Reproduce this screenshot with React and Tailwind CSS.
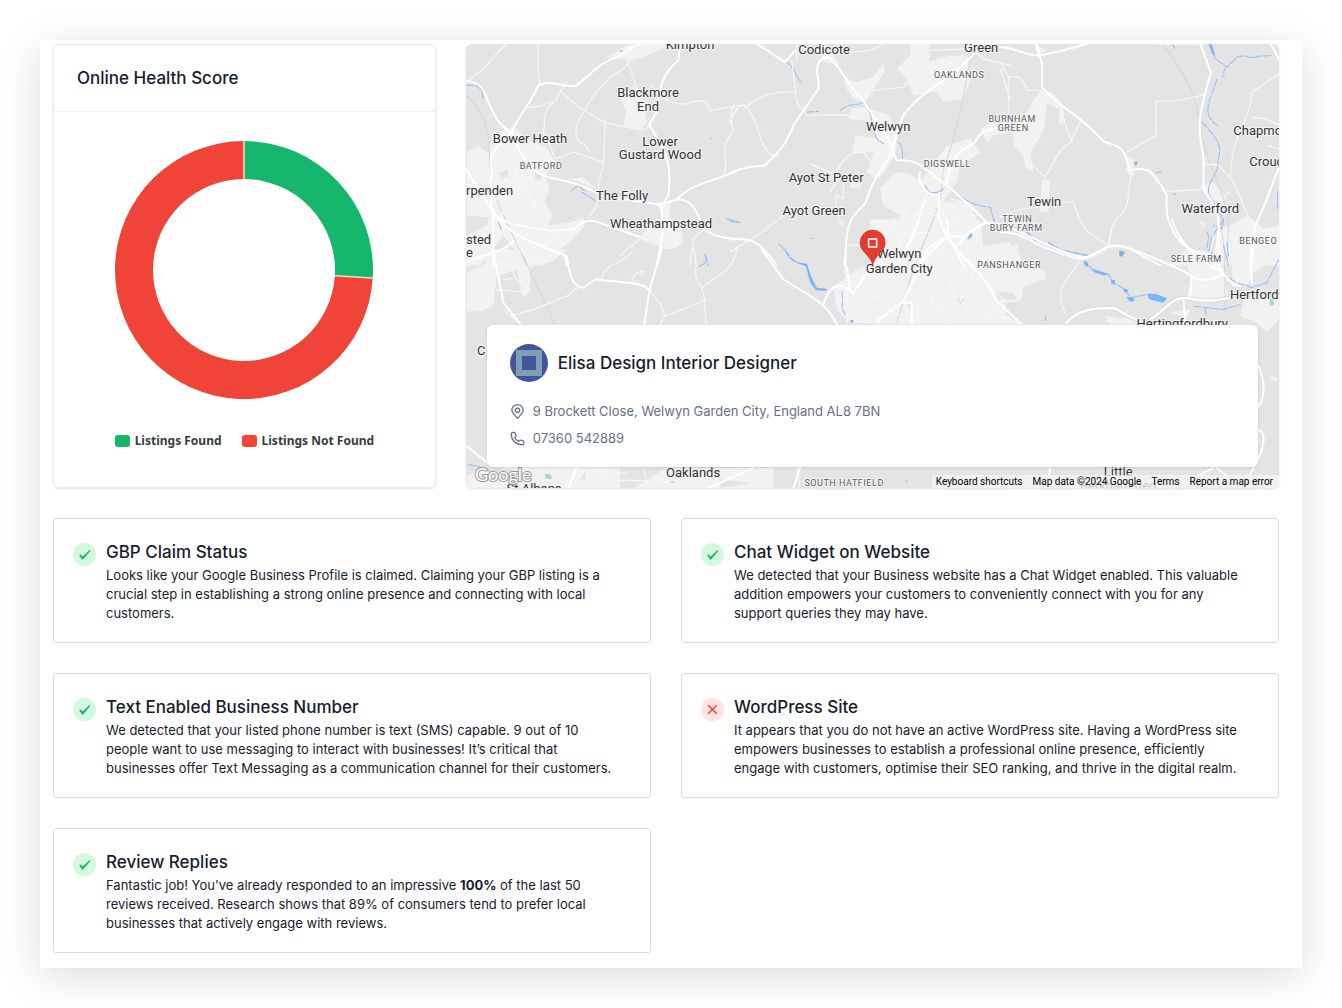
import React from "react";

const TILES = [
  {
    origin: "translate(460 36) scale(0.33333)",
    urban: [
      "M20 350 L55 332 L85 352 L100 300 L160 275 L200 310 L260 335 L285 380 L255 420 L268 460 L255 500 L275 540 L265 570 L330 560 L370 545 L375 570 L330 620 L300 640 L240 690 L150 690 L160 640 L130 600 L60 690 L20 690 L20 600 L80 570 L90 545 L20 540 Z",
      "M482 190 L520 150 L550 190 L560 260 L540 285 L490 270 L498 230 Z",
      "M590 500 L635 495 L625 550 L665 570 L668 625 L640 640 L610 640 L540 610 L570 560 L605 545 Z",
      "M440 65 L500 30 L560 22 L650 24 L520 75 Z",
      "M325 430 L370 425 L410 460 L360 440 Z",
    ],
    shade: ["M115 415 L140 402 L145 415 L125 435 Z", "M225 410 L245 420 L240 435 L225 428 Z"],
    rail: ["M20 180 C70 230 90 290 88 350 C90 460 110 500 135 550 L200 690"],
    minor: [
      "M20 138 L70 100 L120 45 L140 25", "M233 25 C240 60 225 90 240 145", "M205 215 C260 215 260 195 285 200 C300 170 310 150 320 140",
      "M280 200 C240 240 260 260 250 290 L270 330 L285 370 L340 350 L370 360 L430 380", "M300 165 L350 210 L430 260 L495 275 L550 285 L570 270",
      "M500 30 C520 80 510 90 450 125 L400 180 L360 250 C340 280 345 320 370 325 L390 350",
      "M435 255 C430 320 440 380 415 440 C420 500 410 520 385 545", "M575 150 C600 180 620 210 680 205 C740 185 740 200 750 225 L840 210",
      "M820 210 C800 250 830 280 810 300 C770 350 820 390 780 430", "M500 70 L525 140 L540 200", "M205 690 C220 640 270 590 345 590",
      "M25 395 L100 410 L150 440 L220 430", "M50 480 L110 490 L200 450 L260 460", "M120 350 L170 410 L230 520", "M100 400 L60 520", "M155 340 L225 330 L265 380", "M150 450 L120 560", "M180 360 L160 470 L230 500 L200 560", "M200 590 L250 630 L300 600", "M230 600 L250 690", "M560 570 L640 590", "M620 550 L650 630", "M580 600 L665 610", "M690 690 L700 610 L740 570", "M480 660 L540 610",
    ],
    major: [
      "M20 138 C60 135 75 170 85 200 C110 260 130 280 155 290", "M155 290 C170 250 215 200 235 150 C280 130 310 160 350 150 C400 110 420 80 470 65 C510 40 530 25 560 22",
      "M660 22 L655 75 C600 120 600 160 590 230 L568 265 C580 300 630 340 628 430 L625 480 L605 510 L608 590 L590 690",
      "M155 290 C180 360 210 410 265 425 C330 440 380 450 420 480 L600 508 L650 492 C700 440 760 440 840 402",
      "M650 492 C700 490 710 530 730 580 C760 605 800 608 840 612", "M95 400 L92 510 C100 560 160 570 270 585 L340 582 C370 550 400 550 440 570 L540 605",
      "M155 290 C90 350 88 370 95 400", "M100 520 L100 690", "M100 530 C140 600 240 630 315 660 L320 690", "M20 405 L90 515", "M20 680 C80 650 120 660 160 615",
    ],
    water: ["M20 150 C60 145 70 165 68 190", "M115 560 L125 585", "M335 465 L355 450 L375 468", "M365 470 L405 495", "M800 550 L838 560", "M735 660 L745 690", "M480 46 L487 47", "M328 547 L331 548", "M753 309 L756 310"],
  },
  {
    origin: "translate(730 36) scale(0.33333)",
    urban: [
      "M345 130 L380 140 L430 125 L460 80 L465 110 L430 160 L400 200 L370 190 L345 155 Z", "M500 100 L540 60 L540 25 L600 25 L590 80 L660 60 L715 65 L718 140 L700 190 L640 200 L620 170 L550 180 L530 130 Z",
      "M360 220 L400 215 L480 240 L500 330 L480 400 L440 430 L410 410 L430 350 L365 355 L375 300 L440 310 L430 260 L360 250 Z",
      "M450 455 L500 410 L540 415 L570 440 L600 400 L650 330 L720 310 L750 350 L690 390 L680 440 L640 500 L720 500 L740 560 L700 600 L700 690 L435 690 L440 600 L480 600 L510 540 L460 510 Z",
      "M750 280 L780 262 L840 265 L840 290 L790 300 L770 320 Z", "M360 440 L395 440 L390 460 L360 455 Z", "M270 60 L310 60 L330 90 L285 80 Z", "M320 550 L345 560 L335 575 Z", "M700 640 L840 620 L840 690 L700 690 Z",
    ],
    shade: ["M455 425 L500 350 L495 390 Z"],
    rail: ["M718 75 C700 200 670 320 640 400 L630 500 L570 650"],
    minor: [
      "M185 75 L200 200 L230 240 L350 238 L365 250", "M40 220 C90 180 130 165 190 170", "M0 260 C20 210 40 190 60 230 C100 290 70 300 125 360 L150 360", "M200 75 L200 25 ", "M285 60 L420 45 L460 25",
      "M400 200 L430 165 L520 155 L540 130", "M590 90 L600 45 L720 40 L760 70 L840 90", "M600 95 L650 90 L700 60", "M320 410 C340 370 340 360 430 330", "M300 470 L325 430 L310 415 L240 385", "M340 440 L340 490 L315 480 L325 550", "M0 650 L80 600 L160 540", "M350 630 L440 625", "M490 550 L520 690", "M530 500 L500 690", "M470 600 L600 590", "M510 640 L600 650", "M620 540 L560 530 L520 580", "M655 500 L690 540 L680 600", "M655 560 L740 540", "M660 490 L720 505 L740 530", "M670 350 L720 330", "M640 420 L690 390 L670 340", "M810 100 L840 190", "M430 390 L400 350", "M440 280 L480 320",
    ],
    major: [
      "M80 25 L165 80 L195 45", "M290 65 C240 80 270 130 265 160 L190 270 C160 350 120 370 105 390 C50 395 20 400 0 415",
      "M290 60 C340 100 350 150 400 195 C430 250 470 280 485 340 L500 375 C570 370 580 400 650 450 C700 490 740 530 770 560 L840 570",
      "M485 345 C500 270 520 230 550 205 C600 150 670 130 740 45 L760 25", "M485 355 C430 430 420 460 405 505 C340 560 350 600 345 690", "M650 450 C650 370 700 340 735 320 C750 280 790 280 840 268",
      "M570 410 C560 430 580 480 625 480 C640 520 600 530 655 600 L700 605 L770 560", "M655 600 L700 690", "M655 602 L600 650 L570 690", "M0 612 C70 605 90 620 140 690", "M585 490 L550 600 L500 690", "M520 235 L485 350",
    ],
    water: ["M170 80 C200 100 195 130 215 140", "M200 180 L198 195", "M230 230 L265 228", "M330 225 C360 200 370 215 400 200", "M400 195 C430 240 425 280 440 310 L460 325", "M505 322 C520 330 515 360 518 375", "M585 450 C595 480 620 475 640 460", "M655 455 C700 490 720 510 780 515 L795 570", "M712 610 L725 598", "M145 625 C180 650 170 675 230 690", "M0 558 L30 562", "M243 608 L248 609"],
  },
  {
    origin: "translate(1000 36) scale(0.33333)",
    urban: [
      "M120 165 L155 170 L185 205 L193 270 L175 265 L180 220 L140 205 L130 290 L90 350 L100 410 L75 395 L70 360 L40 330 L40 285 L80 230 Z",
      "M125 430 L150 435 L145 530 L120 530 Z", "M375 360 L400 370 L400 420 L385 420 Z", "M600 450 L640 440 L680 490 L660 500 L615 480 Z", "M655 580 L690 570 L740 540 L790 580 L838 570 L838 690 L650 690 Z", "M500 690 L560 640 L630 650 L640 690 Z", "M595 555 L615 560 L612 580 Z", "M0 630 L50 640 L60 690 L0 690 Z", "M100 25 L140 45 L110 60 Z",
    ],
    shade: [],
    rail: ["M490 30 C580 150 590 200 600 280 C620 400 670 450 685 560 L680 690"],
    minor: ["M0 80 L25 125 C60 120 70 130 80 165 L125 165", "M25 125 L25 230", "M185 210 C190 280 220 320 215 320 C170 340 170 370 135 425 L70 365", "M240 260 L213 315", "M380 350 L468 300 L468 198 L540 195 L610 178", "M395 410 C380 470 390 500 370 530 C340 550 330 590 328 630", "M0 545 C80 500 130 530 125 500 L220 500 C240 570 250 590 328 630", "M500 468 L600 462", "M615 387 L655 388 L700 440 L760 580", "M838 115 L755 170 C750 250 700 300 695 370 L690 420", "M755 245 L790 250 L838 268", "M800 330 L838 340", "M630 650 L640 600", "M700 690 L710 600", "M720 600 L820 610", "M800 580 L790 690", "M670 480 L690 470"],
    major: ["M0 35 C60 40 70 60 115 60 C180 50 210 40 260 25", "M110 25 L125 85 L125 155 L145 175 C200 230 240 240 310 318 C360 330 380 345 385 405 C450 390 460 410 500 480 C490 560 530 640 610 655", "M600 25 L632 110 C600 230 590 250 605 340 C620 400 600 440 615 470 C640 500 660 540 655 590 L640 690", "M0 590 C60 590 80 610 130 635 L230 670 C300 670 300 610 390 640 L480 690", "M812 25 L838 75", "M838 390 C810 460 800 500 765 570 L755 690"],
    water: ["M625 25 L645 70 L680 95 L710 65 C750 55 740 75 780 62 L815 60", "M680 95 C660 110 680 115 665 125", "M650 130 C630 200 600 230 650 270", "M605 260 C670 330 660 330 652 390 C650 430 600 450 640 500 C650 540 680 540 665 580 L640 570", "M620 590 C640 620 600 620 635 655", "M670 630 L685 690", "M82 590 L105 615", "M145 620 L180 645 L270 660", "M470 412 L482 408", "M520 476 L527 477", "M832 470 L832 520", "M518 30 L524 38"],
    pools: ["M402 380 L410 378 L411 388 L404 390 Z", "M358 645 L375 650 L365 664 L357 660 Z", "M625 25 L635 28 L645 60 L636 55 Z"],
  },
  {
    origin: "translate(460 250) scale(0.33333)",
    urban: ["M20 70 L80 40 L60 5 L120 0 L320 0 L280 35 L210 55 L210 120 L190 145 L170 60 L110 80 L100 170 L60 185 L20 185 Z", "M80 650 L480 650 L480 716 L20 716 L20 680 Z", "M1120 110 L1190 60 L1260 30 L1260 225 L1170 220 L1130 180 Z", "M620 655 L940 655 L940 716 L520 716 Z"],
    shade: ["M70 650 L160 660 L150 690 L90 670 Z", "M375 665 L375 690 L360 690 Z", "M780 690 L870 700 L780 716 Z"],
    rail: ["M180 0 L285 225"],
    minor: ["M135 185 L180 220", "M150 200 L220 180 L320 140 L350 115", "M425 90 C430 40 500 40 515 5", "M515 98 C520 60 570 60 540 75", "M530 100 L560 115 L600 160 L615 200 L740 150", "M700 0 C720 60 690 70 725 115 C740 150 730 180 740 225", "M725 115 C760 80 820 70 830 0", "M610 200 L600 225", "M120 40 L190 60", "M130 90 L165 85", "M110 120 L210 130", "M140 0 L165 85 L210 120", "M170 0 L240 40", "M250 660 L330 716", "M200 655 L190 716", "M430 655 L425 716", "M390 690 L620 695", "M660 655 L650 716", "M880 655 L900 716", "M1010 655 L1020 716", "M350 660 L500 672", "M550 655 L560 700", "M1160 225 L1165 110 L1150 40 L1160 0", "M1190 150 L1260 180", "M1190 110 L1250 70", "M1200 180 L1250 140"],
    major: ["M100 0 L130 160 L180 222", "M320 20 C330 90 340 110 370 115 L405 90 C500 100 560 100 570 125", "M605 0 L570 115 L552 225", "M905 0 L970 90 C1050 140 1100 160 1130 225", "M1090 165 C1100 130 1120 100 1150 110 L1180 130 L1220 70 L1260 30", "M20 590 L90 645", "M325 716 L350 655", "M745 716 L880 655", "M1020 655 L1000 716", "M1160 50 L1170 125"],
    water: ["M735 15 C745 40 730 45 718 50", "M975 0 C990 40 1010 40 1040 45", "M1145 125 C1150 170 1140 170 1155 195", "M25 645 C60 650 70 660 90 665", "M633 697 L642 698"],
    pools: ["M1015 40 L1040 43 L1055 85 L1070 115 L1100 118 L1100 124 L1068 122 L1050 100 L1038 52 Z", "M1172 210 L1180 212 L1178 220 L1171 219 Z"],
    green: ["M255 675 L268 670 L276 680 L272 690 L256 686 Z"],
  },
  {
    origin: "translate(870 220) scale(0.33333)",
    urban: ["M0 0 L330 0 L340 90 L440 75 L455 130 L525 155 L525 180 L460 200 L450 245 L405 250 L410 290 L470 315 L0 315 Z", "M950 130 L1040 110 L1060 150 L1075 240 L950 240 L960 180 Z", "M1085 30 L1160 50 L1225 30 L1225 110 L1150 160 L1130 200 L1085 190 Z", "M1120 240 L1225 230 L1225 300 L1190 340 L1160 310 L1110 290 Z", "M700 290 L800 300 L800 315 L720 315 Z", "M1200 470 L1222 475 L1218 488 L1200 482 Z", "M900 280 L960 270 L950 295 Z"],
    shade: ["M260 235 L285 240 L270 258 Z", "M375 215 L430 220 L440 240 L385 240 Z", "M110 250 L125 260 L118 270 Z", "M1010 125 L1035 125 L1030 138 L1010 138 Z"],
    rail: ["M190 0 L130 150 L80 310", "M1050 0 L1062 90 L1065 270"],
    minor: ["M75 0 L30 100 L50 200", "M130 0 L120 120 L60 140", "M190 150 C200 180 190 210 185 250 L230 310", "M170 180 L230 170 L300 140", "M240 180 L250 230 L200 240", "M300 130 L310 200 L270 240 L320 300", "M350 190 L400 240", "M200 80 L240 160", "M150 100 L220 110", "M340 90 L330 150", "M630 120 C600 180 540 200 590 290", "M640 120 L700 100 L715 75 L725 20", "M0 230 L60 240", "M40 270 L140 300", "M1000 160 L1010 220", "M1160 120 L1130 60", "M1150 280 L1220 260", "M370 250 L360 305", "M320 295 L420 292", "M990 200 L1040 200", "M290 220 L380 260", "M160 220 L240 290"],
    major: ["M220 30 C230 60 245 80 260 80 L295 40 L340 10 C440 10 500 80 640 115 C700 100 700 70 760 80 C850 110 880 130 940 155 L970 175 C1020 190 1050 170 1060 160", "M230 0 L235 45 L170 90 L100 245 L20 305", "M100 250 L125 250 L125 310", "M255 85 C290 130 350 170 375 240 L450 310", "M905 0 C920 60 980 120 1050 155 L1090 195 L1110 200", "M1045 0 L1045 140 L1060 165", "M960 235 L965 170", "M940 240 L945 310", "M1145 190 L1140 120 L1150 40", "M1165 440 C1190 500 1180 540 1165 560", "M1165 630 C1190 640 1180 680 1165 715 L1140 765", "M540 745 L535 770", "M980 770 L1030 745", "M1040 745 L1070 770"],
    motorway: ["M590 310 C620 270 670 265 730 265 C760 280 770 290 800 300", "M840 300 C900 260 900 235 950 235 C1020 250 1040 240 1080 235"],
    water: ["M470 38 L495 65", "M535 70 L570 90 L650 108", "M640 120 L670 155 L715 165 L730 190 L765 210 L780 235 L830 225 L880 240", "M1060 0 C1020 60 1010 70 1025 105", "M1070 70 L1075 110", "M1080 175 C1100 200 1130 190 1140 205 L1190 190 L1225 120", "M970 260 L1060 270 L1110 255", "M1005 268 L1007 285", "M525 290 L527 302", "M372 0 L375 15", "M108 784 L111 785"],
    pools: ["M295 50 L305 38 L306 50 L295 60 Z", "M640 125 L652 128 L655 142 L645 140 Z", "M748 92 L763 98 L756 112 L748 107 Z", "M665 148 L700 158 L718 165 L700 167 L675 160 Z", "M722 180 L735 183 L732 195 L723 192 Z", "M760 207 L775 210 L770 220 L760 217 Z", "M768 232 L790 235 L792 245 L778 246 Z", "M832 222 L860 224 L890 236 L880 250 L850 243 L835 238 Z"],
    green: ["M1197 238 L1208 240 L1212 255 L1200 260 Z"],
  },
];

const PLACES = [
  ["Kimpton", 690, 50], ["Codicote", 824, 55], ["Green", 981, 53], ["Blackmore", 648, 98], ["End", 648, 112],
  ["Bower Heath", 530, 144], ["Lower", 660, 147], ["Gustard Wood", 660, 160], ["The Folly", 622, 201], ["Wheathampstead", 661, 229],
  ["Welwyn", 888, 132], ["Ayot St Peter", 826, 183], ["Ayot Green", 814, 216], ["Tewin", 1044, 207], ["Waterford", 1210, 214],
  ["Welwyn", 899, 259], ["Garden City", 899, 273], ["Hertford", 1254, 299], ["Hertingfordbury", 1182, 328], ["Oaklands", 693, 477],
  ["Little", 1118, 476], ["Berkhamsted", 1118, 490], ["St Albans", 534, 493],
];
const EDGE_PLACES = [
  ["rpenden", 466, 196], ["sted", 466, 245], ["e", 466, 258], ["C", 477, 355], ["Chapmore", 1233, 136], ["Crouch", 1249, 167], ["at Stone", 1157, 45],
];
const DISTRICTS = [
  ["OAKLANDS", 959, 79], ["BURNHAM", 1012, 123], ["GREEN", 1013, 132], ["BATFORD", 541, 170], ["DIGSWELL", 947, 168],
  ["TEWIN", 1017, 223], ["BURY FARM", 1016, 232], ["PANSHANGER", 1009, 269], ["SELE FARM", 1196, 263], ["BENGEO", 1258, 245], ["SOUTH HATFIELD", 844, 486],
];

function Paths({ list = [], ...rest }) {
  return list.map((d, i) => <path key={i} d={d} {...rest} />);
}

function MapDrawing() {
  const line = { fill: "none", strokeLinecap: "round", strokeLinejoin: "round" };
  const layer = (key, props) =>
    TILES.map((t, i) => (
      <g key={key + i} transform={t.origin}>
        <Paths list={t[key]} {...props} />
      </g>
    ));
  return (
    <svg viewBox="466 44 813 445" preserveAspectRatio="xMidYMid slice" className="absolute inset-0 h-full w-full" role="img" aria-label="Map of Welwyn Garden City">
      <rect x="0" y="0" width="1800" height="900" fill="#e4e4e4" />
      {layer("urban", { fill: "#f2f2f2" })}
      {layer("shade", { fill: "#e2e2e2" })}
      {layer("rail", { ...line, stroke: "#d5d6d8", strokeWidth: 3 })}
      {layer("water", { ...line, stroke: "#8fbdf0", strokeWidth: 3, strokeDasharray: "22 5" })}
      {layer("pools", { fill: "#78b5f7" })}
      {layer("green", { fill: "#a5dcb8" })}
      {layer("minor", { ...line, stroke: "#f6f6f6", strokeWidth: 4 })}
      {layer("major", { ...line, stroke: "#ffffff", strokeWidth: 6 })}
      {layer("motorway", { ...line, stroke: "#d3d3d3", strokeWidth: 12 })}
      {layer("motorway", { ...line, stroke: "#ffffff", strokeWidth: 8 })}
      <g fontFamily="Roboto, sans-serif" fill="#303236" stroke="#f5f5f5" strokeWidth="2" paintOrder="stroke" strokeLinejoin="round">
        <g fontSize="13" textAnchor="middle">
          {PLACES.map(([name, x, y]) => <text key={name + y} x={x} y={y}>{name}</text>)}
        </g>
        <g fontSize="13">
          {EDGE_PLACES.map(([name, x, y]) => <text key={name} x={x} y={y}>{name}</text>)}
        </g>
        <g fontSize="9" textAnchor="middle" fill="#55585c" letterSpacing="0.06em">
          {DISTRICTS.map(([name, x, y]) => <text key={name + y} x={x} y={y}>{name}</text>)}
        </g>
      </g>
      <path d="M872.500 266 C871.500 260 868 257 863.500 252 C861 249 860 246.500 860 243 A12.500 12.500 0 0 1 885 243 C885 246.500 884 249 881.500 252 C877 257 873.500 260 872.500 266 Z" fill="#e33d32" stroke="#b8312a" strokeWidth="0.600" />
      <rect x="868.500" y="239.500" width="8" height="8" fill="none" stroke="#fff" strokeWidth="1.500" />
      <text x="475" y="481" fontFamily="Lato, sans-serif" fontSize="18" fill="#fff" stroke="#999" strokeWidth="2" paintOrder="stroke">Google</text>
    </svg>
  );
}

function Donut({ share }) {
  const c = 129, outer = 129, inner = 91;
  const a = share * 2 * Math.PI;
  const at = (r) => `${c + r * Math.sin(a)} ${c - r * Math.cos(a)}`;
  return (
    <svg viewBox="0 0 258 258" className="size-[258px]" role="img" aria-label="Listings found and not found">
      <path fill="#15b76c" d={`M${c} 0 A${outer} ${outer} 0 0 1 ${at(outer)} L${at(inner)} A${inner} ${inner} 0 0 0 ${c} ${c - inner} Z`} />
      <path fill="#f04438" d={`M${at(outer)} A${outer} ${outer} 0 1 1 ${c} 0 L${c} ${c - inner} A${inner} ${inner} 0 1 0 ${at(inner)} Z`} />
      <path d={`M${c} 0 V${c - inner} M${at(outer)} L${at(inner)}`} stroke="#f6dcc0" strokeWidth="1.500" />
    </svg>
  );
}

function StatusIcon({ ok }) {
  return (
    <svg viewBox="0 0 23 23" className="mt-1 size-[23px] shrink-0" role="img" aria-label={ok ? "Passed" : "Failed"}>
      <circle cx="11.500" cy="11.500" r="11.500" fill={ok ? "#d1fadf" : "#fee4e2"} />
      {ok ? (
        <path d="M6.200 12.400 L7.300 11.200 L9.600 13.400 L16.600 6.900 L17.500 7.800 L10.100 16.400 Q9.600 16.900 9.100 16.400 Z" fill="#2fae6a" />
      ) : (
        <path d="M7.200 7.200 L15.800 15.800 M15.800 7.200 L7.200 15.800" stroke="#f04438" strokeWidth="1.500" />
      )}
    </svg>
  );
}

function StatusCard({ title, ok = true, children }) {
  return (
    <article className="flex gap-[10px] rounded-[3px] border border-[#d9dcde] pt-[20px] pr-[32px] pb-[19px] pl-[19px]">
      <StatusIcon ok={ok} />
      <div>
        <h2 className="text-[17px] leading-[26px] font-medium">{title}</h2>
        <p className="mt-px text-[13px] leading-[19px]">{children}</p>
      </div>
    </article>
  );
}

export default function App() {
  return (
    <div className="bg-white p-10 font-['Inter',sans-serif] text-[#161c2d]">
      <main className="flex flex-col gap-[30px] bg-white pt-1 pr-[23px] pb-[15px] pl-[13px] shadow-[0_8px_40px_rgba(0,0,0,0.14)]">
        <div className="grid grid-cols-[8fr_17fr] gap-[30px]">
          <section className="rounded-md border border-[#ebecf0] shadow-sm">
            <h2 className="border-b border-[#eef0f4] px-[23px] py-[20px] text-[17px] leading-[26px] font-medium">Online Health Score</h2>
            <div className="flex flex-col items-center pt-[29px] pb-[38px]">
              <Donut share={0.26} />
              <ul className="mt-[34px] flex gap-5 font-['Noto_Sans',sans-serif] text-[12px] leading-4 font-bold text-[#373d3f]">
                <li className="flex items-center gap-[5px]"><span className="h-3 w-[15px] rounded-[3px] bg-[#15b76c]" />Listings Found</li>
                <li className="flex items-center gap-[5px]"><span className="h-3 w-[15px] rounded-[3px] bg-[#f04438]" />Listings Not Found</li>
              </ul>
            </div>
          </section>
          <section className="relative overflow-hidden rounded-md shadow-sm">
            <MapDrawing />
            <div className="absolute right-[21px] bottom-[21px] left-[21px] rounded-md bg-white px-[23px] pt-[19px] pb-[19px] shadow-sm">
              <div className="flex items-center gap-[10px]">
                <svg viewBox="0 0 38 38" className="size-[38px]" aria-hidden="true">
                  <circle cx="19" cy="19" r="19" fill="#44539a" />
                  <rect x="6" y="6" width="26" height="26" fill="#7ba0b3" />
                  <rect x="12" y="12" width="14" height="14" fill="#44539a" />
                </svg>
                <h2 className="text-[17px] leading-[26px] font-medium">Elisa Design Interior Designer</h2>
              </div>
              <address className="mt-[20px] flex flex-col gap-[8px] text-[13px] leading-[19px] text-[#667085] not-italic">
                <span className="flex items-center gap-2">
                  <svg viewBox="0 0 24 24" className="size-[15px]" fill="none" stroke="#667085" strokeWidth="2" aria-hidden="true">
                    <path d="M12 23 C8 18 3 14.500 3 10 A9 9 0 0 1 21 10 C21 14.500 16 18 12 23 Z" />
                    <circle cx="12" cy="10" r="3.500" />
                  </svg>
                  9 Brockett Close, Welwyn Garden City, England AL8 7BN
                </span>
                <span className="flex items-center gap-2">
                  <svg viewBox="0 0 24 24" className="size-[15px]" fill="none" stroke="#667085" strokeWidth="2" strokeLinejoin="round" aria-hidden="true">
                    <path d="M2 5 C2 3 3.500 2 5 2 H6.500 C7.500 2 8 2.500 8.400 3.500 L9.600 7.200 C9.900 8.200 9.500 8.900 8.800 9.400 L7.500 10.400 C9 13.500 11 15.500 13.800 16.700 L14.900 15.300 C15.400 14.600 16.200 14.300 17 14.600 L20.800 15.800 C21.700 16.100 22.200 16.800 22.200 17.600 V19.500 C22.200 21 21 22.200 19.500 22.200 C10 22.200 2 14.500 2 5 Z" />
                  </svg>
                  07360 542889
                </span>
              </address>
            </div>
            <div className="absolute right-0 bottom-0 flex gap-[10px] bg-[#f5f5f5]/75 pr-[6px] pl-1 font-['Roboto',sans-serif] text-[10px] leading-[13px] text-black">
              <button type="button">Keyboard shortcuts</button>
              <span>Map data ©2024 Google</span>
              <a href="#terms">Terms</a>
              <a href="#report">Report a map error</a>
            </div>
          </section>
        </div>
        <div className="grid grid-cols-2 gap-[30px]">
          <StatusCard title="GBP Claim Status">
            Looks like your Google Business Profile is claimed. Claiming your GBP listing is a crucial step in establishing a strong online presence and connecting with local customers.
          </StatusCard>
          <StatusCard title="Chat Widget on Website">
            We detected that your Business website has a Chat Widget enabled. This valuable addition empowers your customers to conveniently connect with you for any support queries they may have.
          </StatusCard>
          <StatusCard title="Text Enabled Business Number">
            We detected that your listed phone number is text (SMS) capable. 9 out of 10 people want to use messaging to interact with businesses! It’s critical that businesses offer Text Messaging as a communication channel for their customers.
          </StatusCard>
          <StatusCard title="WordPress Site" ok={false}>
            It appears that you do not have an active WordPress site. Having a WordPress site empowers businesses to establish a professional online presence, efficiently engage with customers, optimise their SEO ranking, and thrive in the digital realm.
          </StatusCard>
          <StatusCard title="Review Replies">
            Fantastic job! You've already responded to an impressive <strong className="font-bold">100%</strong> of the last 50 reviews received. Research shows that 89% of consumers tend to prefer local businesses that actively engage with reviews.
          </StatusCard>
        </div>
      </main>
    </div>
  );
}
